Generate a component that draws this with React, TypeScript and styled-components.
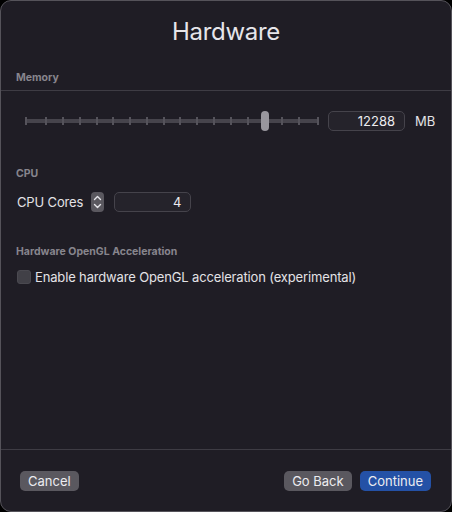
import React from "react";
import styled, { createGlobalStyle } from "styled-components";

const Global = createGlobalStyle`
  html, body { margin: 0; padding: 0; background: #000; }
  body { font-family: Inter, "Noto Sans", sans-serif; -webkit-font-smoothing: antialiased; }
  * { box-sizing: border-box; }
`;

const Window = styled.div`
  width: 452px;
  height: 512px;
  background: #1f1d25;
  border: 1px solid #55535a;
  border-radius: 11px;
  display: flex;
  flex-direction: column;
  overflow: hidden;
  color: #e3e2e6;
`;

const Title = styled.h1`
  margin: 0;
  height: 62px;
  padding-top: 16px;
  text-align: center;
  font-size: 24px;
  font-weight: 400;
  color: #e6e5ea;
  letter-spacing: -0.3px;
`;

const SectionLabel = styled.div<{ $top: number }>`
  margin-top: ${(p) => p.$top}px;
  padding-left: 15px;
  font-size: 10.5px;
  font-weight: 700;
  color: #87858d;
  line-height: 14px;
`;

const Separator = styled.div<{ $top: number }>`
  margin-top: ${(p) => p.$top}px;
  height: 1px;
  background: #3e3c44;
`;

const SliderRow = styled.div`
  margin-top: 20px;
  display: flex;
  align-items: center;
  padding-left: 24px;
  height: 20px;
`;

const Track = styled.div`
  position: relative;
  width: 294px;
  height: 20px;
  display: flex;
  align-items: center;
`;

const TrackBar = styled.div`
  width: 100%;
  height: 4px;
  background: #46444c;
  border-radius: 1px;
`;

const Tick = styled.div`
  position: absolute;
  top: 6px;
  width: 2px;
  height: 8px;
  background: #55535b;
`;

const Thumb = styled.div`
  position: absolute;
  top: 0;
  width: 8px;
  height: 20px;
  border-radius: 4px;
  background: #98969d;
`;

const NumField = styled.div<{ $w: number }>`
  width: ${(p) => p.$w}px;
  height: 20px;
  border: 1px solid #45434b;
  border-radius: 5px;
  background: #25232b;
  font-size: 13px;
  color: #ecebef;
  text-align: right;
  padding-right: 9px;
  line-height: 18px;
`;

const Unit = styled.span`
  margin-left: 10px;
  font-size: 13px;
  color: #e3e2e6;
`;

const Row = styled.div<{ $top: number }>`
  margin-top: ${(p) => p.$top}px;
  padding-left: 16px;
  display: flex;
  align-items: center;
  height: 20px;
  font-size: 13px;
  letter-spacing: -0.15px;
`;

const Stepper = styled.div`
  margin-left: 8px;
  margin-right: 10px;
  width: 13px;
  height: 20px;
  border-radius: 4px;
  background: #5a585f;
  display: flex;
  align-items: center;
  justify-content: center;
`;

const Checkbox = styled.div`
  width: 14px;
  height: 14px;
  border-radius: 3px;
  background: #414047;
  border: 1px solid #4a4950;
  margin-right: 4px;
`;

const Spacer = styled.div`
  flex: 1;
`;

const Footer = styled.div`
  height: 61px;
  display: flex;
  align-items: center;
  padding: 0 20px 0 19px;
  gap: 8px;
`;

const Button = styled.div<{ $primary?: boolean }>`
  height: 20px;
  padding: 0 8px;
  border-radius: 5px;
  font-size: 13px;
  line-height: 20px;
  color: #ececf0;
  background: ${(p) => (p.$primary ? "#2451a6" : "#5a585f")};
`;

const ticks = [0, 20, 37, 54, 71, 87, 104, 121, 138, 154, 171, 188, 205, 222, 256, 273, 292];

export default function App() {
  return (
    <>
      <Global />
      <Window>
        <Title>Hardware</Title>
        <SectionLabel $top={8}>Memory</SectionLabel>
        <Separator $top={5} />
        <SliderRow>
          <Track>
            <TrackBar />
            {ticks.map((t) => (
              <Tick key={t} style={{ left: t }} />
            ))}
            <Thumb style={{ left: 236 }} />
          </Track>
          <NumField $w={77} style={{ marginLeft: 9 }}>12288</NumField>
          <Unit>MB</Unit>
        </SliderRow>
        <SectionLabel $top={36}>CPU</SectionLabel>
        <Row $top={11}>
          CPU Cores
          <Stepper>
            <svg width="9" height="16" viewBox="0 0 9 16" fill="none" stroke="#e6e5ea" strokeWidth="1.4" strokeLinecap="round" strokeLinejoin="round">
              <path d="M1.5 5.5 L4.5 2.5 L7.5 5.5" />
              <path d="M1.5 10.5 L4.5 13.5 L7.5 10.5" />
            </svg>
          </Stepper>
          <NumField $w={77}>4</NumField>
        </Row>
        <SectionLabel $top={33}>Hardware OpenGL Acceleration</SectionLabel>
        <Row $top={8}>
          <Checkbox />
          Enable hardware OpenGL acceleration (experimental)
        </Row>
        <Separator $top={163} />
        <Footer>
          <Button>Cancel</Button>
          <Spacer />
          <Button>Go Back</Button>
          <Button $primary>Continue</Button>
        </Footer>
      </Window>
    </>
  );
}
